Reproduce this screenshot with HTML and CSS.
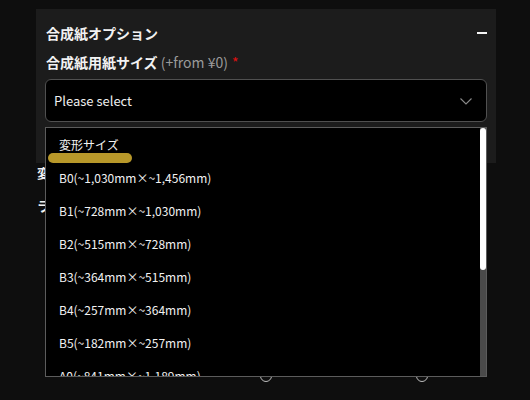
FILE: index.html
```html
<!DOCTYPE html>
<html lang="ja">
<head>
<meta charset="utf-8">
<title>合成紙オプション</title>
<link rel="stylesheet" href="styles.css">
</head>
<body>
<div class="page">
  <section class="panel">
    <div class="panel-head">
      <h2 class="panel-title">合成紙オプション</h2>
      <span class="collapse" aria-label="閉じる"></span>
    </div>
    <div class="field">
      <div class="field-label">合成紙用紙サイズ <span class="price">(+from ¥0)</span><span class="req">*</span></div>
      <div class="select-wrap">
        <div class="select">
          <span>Please select</span>
          <svg class="chevron" width="12" height="7" viewBox="0 0 12 7"><path d="M0.5 0.5 L6 6 L11.5 0.5" fill="none" stroke="#8a8a8a" stroke-width="1.1"/></svg>
        </div>
        <div class="menu">
          <ul class="listbox">
            <li class="opt opt-group">変形サイズ<span class="marker"></span></li>
            <li class="opt">B0(~1,030mm×~1,456mm)</li>
            <li class="opt">B1(~728mm×~1,030mm)</li>
            <li class="opt">B2(~515mm×~728mm)</li>
            <li class="opt">B3(~364mm×~515mm)</li>
            <li class="opt">B4(~257mm×~364mm)</li>
            <li class="opt">B5(~182mm×~257mm)</li>
            <li class="opt">A0(~841mm×~1,189mm)</li>
            <li class="opt">A1(~594mm×~841mm)</li>
            <li class="opt">A2(~420mm×~594mm)</li>
            <li class="opt">A3(~297mm×~420mm)</li>
            <li class="opt">A4(~210mm×~297mm)</li>
            <li class="opt">A5(~148mm×~210mm)</li>
          </ul>
          <div class="scrollbar"><div class="thumb"></div></div>
        </div>
      </div>
    </div>
  </section>

  <section class="more">
    <div class="more-label">変形</div>
    <div class="more-label">ラミ</div>
    <div class="spacer"></div>
    <div class="radios">
      <label class="radio"><span class="dot"></span></label>
      <label class="radio"><span class="dot"></span></label>
    </div>
  </section>
</div>
</body>
</html>
```

FILE: styles.css
```css
* { box-sizing: border-box; }

html, body {
  margin: 0;
  padding: 0;
  background: #0e0e0e;
  color: #f2f2f2;
  font-family: "Noto Sans CJK JP", "Noto Sans", sans-serif;
  height: 100%;
  overflow: hidden;
}

.page {
  padding: 9px 0 0 36px;
  width: 496px;
}

.panel {
  background: #1c1c1c;
  padding: 14px 9px 41px 9px;
}

.panel-head {
  display: flex;
  align-items: center;
  justify-content: space-between;
  height: 20px;
}

.panel-title {
  margin: 0 0 0 1px;
  font-size: 14px;
  line-height: 20px;
  font-weight: 700;
}

.collapse {
  display: block;
  width: 10px;
  height: 2px;
  background: #f4f4f4;
}

.field { margin-top: 9px; }

.field-label {
  margin-left: 1px;
  font-size: 14px;
  line-height: 20px;
  font-weight: 700;
}

.price {
  font-weight: 400;
  color: #9a9a9a;
}

.req {
  color: #e01010;
  font-weight: 400;
  margin-left: 4px;
}

.select-wrap {
  position: relative;
  margin-top: 7px;
}

.select {
  height: 43px;
  border: 1px solid #505050;
  border-radius: 6px;
  background: #000;
  display: flex;
  align-items: center;
  justify-content: space-between;
  padding: 0 14px 0 8px;
  font-size: 13px;
  color: #f0f0f0;
}

.chevron { display: block; margin-top: 1px; }

/* open option menu, drawn over the content below */
.menu {
  position: absolute;
  left: 0;
  right: 0;
  top: 48px;
  height: 250px;
  background: #000;
  border: 1px solid #5c5c5c;
  z-index: 5;
  display: flex;
  overflow: hidden;
}

.listbox {
  flex: 1;
  margin: 0;
  padding: 0;
  list-style: none;
  overflow: hidden;
}

.scrollbar {
  width: 6px;
  background: #4a4a4a;
  flex: none;
}

.thumb {
  height: 142px;
  background: #ffffff;
  border-radius: 3px;
}

.opt {
  position: relative;
  height: 33px;
  line-height: 33px;
  padding-left: 13px;
  font-size: 12px;
  color: #f2f2f2;
  white-space: nowrap;
}

.marker {
  position: absolute;
  left: 2px;
  top: 25px;
  width: 84px;
  height: 10px;
  border-radius: 5px;
  background: #b8982a;
}

.more {
  padding-left: 1px;
}

.more-label {
  font-size: 13px;
  line-height: 20px;
  font-weight: 700;
  margin-bottom: 13px;
}

.spacer { height: 141px; }

.radios {
  display: grid;
  grid-template-columns: repeat(2, 156px);
  margin-left: 151px;
}

.radio {
  display: flex;
  justify-content: center;
}

.dot {
  width: 12px;
  height: 12px;
  border: 1px solid #bdbdbd;
  border-radius: 50%;
}
```
